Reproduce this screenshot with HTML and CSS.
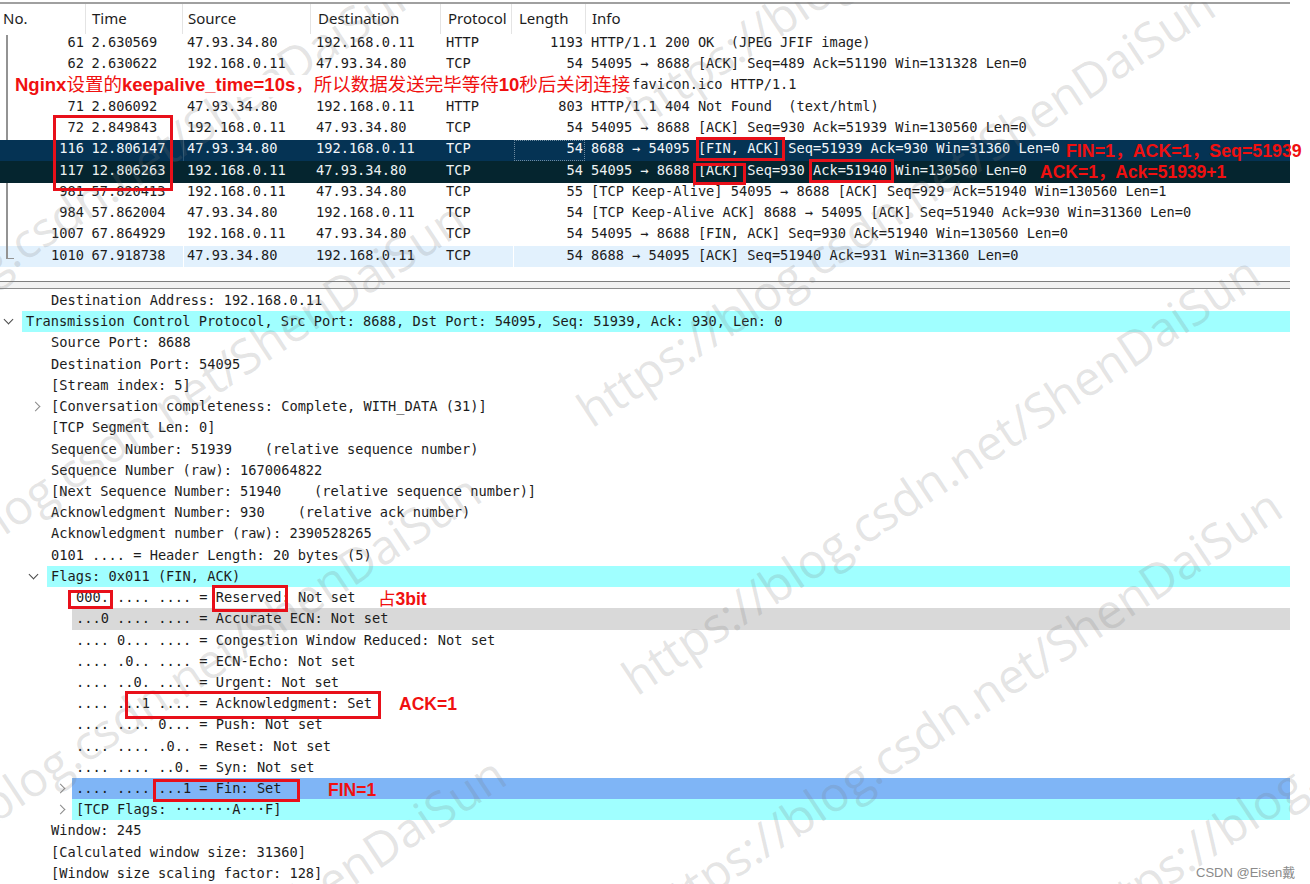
FILE: index.html
```html
<!DOCTYPE html>
<html lang="zh">
<head>
<meta charset="utf-8">
<title>Wireshark</title>
<link rel="stylesheet" href="styles.css">
</head>
<body>
<main class="app">
  <section class="packets">
    <div class="pk-head">
      <span class="c-no">No.</span><span class="c-time">Time</span><span class="c-src">Source</span><span class="c-dst">Destination</span><span class="c-proto">Protocol</span><span class="c-len">Length</span><span class="c-info">Info</span>
    </div>
    <div class="pk-row"><span class="c-no">61</span><span class="c-time">2.630569</span><span class="c-src">47.93.34.80</span><span class="c-dst">192.168.0.11</span><span class="c-proto">HTTP</span><span class="c-len">1193</span><span class="c-info">HTTP/1.1 200 OK  (JPEG JFIF image)</span></div>
    <div class="pk-row"><span class="c-no">62</span><span class="c-time">2.630622</span><span class="c-src">192.168.0.11</span><span class="c-dst">47.93.34.80</span><span class="c-proto">TCP</span><span class="c-len">54</span><span class="c-info">54095 → 8688 [ACK] Seq=489 Ack=51190 Win=131328 Len=0</span></div>
    <div class="pk-row"><span class="c-no">69</span><span class="c-time">2.764391</span><span class="c-src">192.168.0.11</span><span class="c-dst">47.93.34.80</span><span class="c-proto">HTTP</span><span class="c-len">494</span><span class="c-info">GET /favicon.ico HTTP/1.1</span></div>
    <div class="pk-row"><span class="c-no">71</span><span class="c-time">2.806092</span><span class="c-src">47.93.34.80</span><span class="c-dst">192.168.0.11</span><span class="c-proto">HTTP</span><span class="c-len">803</span><span class="c-info">HTTP/1.1 404 Not Found  (text/html)</span></div>
    <div class="pk-row"><span class="c-no">72</span><span class="c-time">2.849843</span><span class="c-src">192.168.0.11</span><span class="c-dst">47.93.34.80</span><span class="c-proto">TCP</span><span class="c-len">54</span><span class="c-info">54095 → 8688 [ACK] Seq=930 Ack=51939 Win=130560 Len=0</span></div>
    <div class="pk-row sel"><span class="c-no">116</span><span class="c-time">12.806147</span><span class="c-src">47.93.34.80</span><span class="c-dst">192.168.0.11</span><span class="c-proto">TCP</span><span class="c-len">54</span><span class="c-info">8688 → 54095 [FIN, ACK] Seq=51939 Ack=930 Win=31360 Len=0</span></div>
    <div class="pk-row rel"><span class="c-no">117</span><span class="c-time">12.806263</span><span class="c-src">192.168.0.11</span><span class="c-dst">47.93.34.80</span><span class="c-proto">TCP</span><span class="c-len">54</span><span class="c-info">54095 → 8688 [ACK] Seq=930 Ack=51940 Win=130560 Len=0</span></div>
    <div class="pk-row"><span class="c-no">981</span><span class="c-time">57.820413</span><span class="c-src">192.168.0.11</span><span class="c-dst">47.93.34.80</span><span class="c-proto">TCP</span><span class="c-len">55</span><span class="c-info">[TCP Keep-Alive] 54095 → 8688 [ACK] Seq=929 Ack=51940 Win=130560 Len=1</span></div>
    <div class="pk-row"><span class="c-no">984</span><span class="c-time">57.862004</span><span class="c-src">47.93.34.80</span><span class="c-dst">192.168.0.11</span><span class="c-proto">TCP</span><span class="c-len">54</span><span class="c-info">[TCP Keep-Alive ACK] 8688 → 54095 [ACK] Seq=51940 Ack=930 Win=31360 Len=0</span></div>
    <div class="pk-row"><span class="c-no">1007</span><span class="c-time">67.864929</span><span class="c-src">192.168.0.11</span><span class="c-dst">47.93.34.80</span><span class="c-proto">TCP</span><span class="c-len">54</span><span class="c-info">54095 → 8688 [FIN, ACK] Seq=930 Ack=51940 Win=130560 Len=0</span></div>
    <div class="pk-row pale"><span class="c-no">1010</span><span class="c-time">67.918738</span><span class="c-src">47.93.34.80</span><span class="c-dst">192.168.0.11</span><span class="c-proto">TCP</span><span class="c-len">54</span><span class="c-info">8688 → 54095 [ACK] Seq=51940 Ack=931 Win=31360 Len=0</span></div>
  </section>

  <div class="splitter"></div>

  <section class="details">
    <div class="row l1">Destination Address: 192.168.0.11</div>
    <div class="row l0 cyan"><span class="tw open"></span>Transmission Control Protocol, Src Port: 8688, Dst Port: 54095, Seq: 51939, Ack: 930, Len: 0</div>
    <div class="row l1">Source Port: 8688</div>
    <div class="row l1">Destination Port: 54095</div>
    <div class="row l1">[Stream index: 5]</div>
    <div class="row l1"><span class="tw"></span>[Conversation completeness: Complete, WITH_DATA (31)]</div>
    <div class="row l1">[TCP Segment Len: 0]</div>
    <div class="row l1">Sequence Number: 51939    (relative sequence number)</div>
    <div class="row l1">Sequence Number (raw): 1670064822</div>
    <div class="row l1">[Next Sequence Number: 51940    (relative sequence number)]</div>
    <div class="row l1">Acknowledgment Number: 930    (relative ack number)</div>
    <div class="row l1">Acknowledgment number (raw): 2390528265</div>
    <div class="row l1">0101 .... = Header Length: 20 bytes (5)</div>
    <div class="row l1 cyan"><span class="tw open"></span>Flags: 0x011 (FIN, ACK)</div>
    <div class="row l2">000. .... .... = Reserved: Not set</div>
    <div class="row l2 grey">...0 .... .... = Accurate ECN: Not set</div>
    <div class="row l2">.... 0... .... = Congestion Window Reduced: Not set</div>
    <div class="row l2">.... .0.. .... = ECN-Echo: Not set</div>
    <div class="row l2">.... ..0. .... = Urgent: Not set</div>
    <div class="row l2">.... ...1 .... = Acknowledgment: Set</div>
    <div class="row l2">.... .... 0... = Push: Not set</div>
    <div class="row l2">.... .... .0.. = Reset: Not set</div>
    <div class="row l2">.... .... ..0. = Syn: Not set</div>
    <div class="row l2 blue"><span class="tw"></span>.... .... ...1 = Fin: Set</div>
    <div class="row l2 cyan"><span class="tw"></span>[TCP Flags: ·······A···F]</div>
    <div class="row l1">Window: 245</div>
    <div class="row l1">[Calculated window size: 31360]</div>
    <div class="row l1">[Window size scaling factor: 128]</div>
  </section>

  <div class="tree"></div>

  <div class="marks">
    <span class="wm w1">https://blog.csdn.net/ShenDaiSun</span>
    <span class="wm w2">https://blog.csdn.net/ShenDaiSun</span>
    <span class="wm w3">https://blog.csdn.net/ShenDaiSun</span>
    <span class="wm w4">https://blog.csdn.net/ShenDaiSun</span>
    <span class="wm w5">https://blog.csdn.net/ShenDaiSun</span>
    <span class="wm w6">https://blog.csdn.net/ShenDaiSun</span>
    <span class="wm w7">https://blog.csdn.net/ShenDaiSun</span>
    <span class="wm w8">https://blog.csdn.net/ShenDaiSun</span>
    <span class="wm w9">https://blog.csdn.net/ShenDaiSun</span>
  </div>

  <div class="note n-top">Nginx<span class="cn">设置的</span>keepalive_time=10s<span class="cn">，所以数据发送完毕等待</span>10<span class="cn">秒后关闭连接</span></div>
  <div class="note n-fin">FIN=1，ACK=1，Seq=51939</div>
  <div class="note n-ack">ACK=1，Ack=51939+1</div>
  <div class="note n-3bit"><span class="cn">占</span>3bit</div>
  <div class="note n-ack2">ACK=1</div>
  <div class="note n-fin2">FIN=1</div>

  <div class="box b-no"></div>
  <div class="box b-finack"></div>
  <div class="box b-ack"></div>
  <div class="box b-ack51940"></div>
  <div class="box b-000"></div>
  <div class="box b-res"></div>
  <div class="box b-ackflag"></div>
  <div class="box b-finflag"></div>

  <div class="credit">CSDN @Eisen戴</div>
</main>
</body>
</html>
```
FILE: styles.css
```css
* { box-sizing: border-box; }
html, body { margin: 0; padding: 0; background: #fff; }
body { width: 1310px; height: 884px; overflow: hidden; }
.app {
  position: relative;
  width: 1290px;
  height: 884px;
  font-family: "DejaVu Sans Mono", "Liberation Mono", monospace;
  font-size: 13.67px;
  color: #1c1c1c;
}
.packets { border-top: 2px solid #a0a0a0; margin-top: 2px; height: 279px; }
.pk-head {
  display: flex;
  height: 30px;
  font-family: "Noto Sans", "Liberation Sans", sans-serif;
  font-size: 15px;
  line-height: 28px;
}
.pk-head span { border-right: 1px solid #e4e4e4; padding-left: 3px; }
.pk-head .c-no { width: 86px; text-align: left; }
.pk-head .c-time { width: 97px; padding-left: 6px; }
.pk-head .c-src { width: 128px; padding-left: 5px; }
.pk-head .c-dst { width: 130px; padding-left: 7px; }
.pk-head .c-proto { width: 71px; padding-left: 7px; }
.pk-head .c-len { width: 74px; padding-left: 7px; text-align: left; }
.pk-head .c-info { border: 0; padding-left: 6px; flex: 1; }

.pk-row { display: flex; height: 21.22px; line-height: 17px; white-space: pre; }
.pk-row span { display: block; }
.c-no { width: 84px; text-align: right; flex: none; }
.c-time { width: 103px; padding-left: 7.5px; flex: none; position: relative; }
.c-src { width: 129px; flex: none; }
.c-dst { width: 130px; flex: none; }
.c-proto { width: 70px; flex: none; }
.c-len { width: 67px; text-align: right; flex: none; position: relative; }
.c-info { padding-left: 8px; flex: 1; }
.sel, .rel { position: relative; z-index: 1; }
.sel { background: #053354; color: #f2f6f9; }
.rel { background: #05252f; color: #eef2f3; line-height: 19px; }
.pale { background: #e2f1fd; line-height: 19px; }
.sel .c-len { outline: 1px dotted #6f8ba0; outline-offset: 1px; height: 17px; margin-top: 2px; line-height: 13px; }
.sel .c-time::after, .pale .c-time::after, .pale .c-len::before {
  content: "";
  position: absolute;
  top: 0;
  bottom: -5px;
  width: 1px;
  background: #fff;
}
.sel .c-time::after { right: 3px; background: #2a5573; }
.pale .c-time::after { right: 3px; }
.pale .c-len::before { left: -3px; }

.splitter {
  height: 8px;
  border-top: 1px solid #7f7f7f;
  border-bottom: 1px solid #8c8c8c;
  background: #f2f2f2;
}
.details { margin-top: 1px; }
.row { height: 21.22px; line-height: 21px; position: relative; white-space: pre; }
.l0 { margin-left: 22px; padding-left: 4px; }
.l1 { margin-left: 47px; padding-left: 4px; }
.l2 { margin-left: 72px; padding-left: 4px; }
.cyan { background: #a0ffff; }
.grey { background: #d9d9d9; }
.blue { background: #7fb5f6; }
.tw {
  position: absolute;
  left: -15px;
  top: 7px;
  width: 7px;
  height: 7px;
  border-top: 1.5px solid #8a8a8a;
  border-right: 1.5px solid #8a8a8a;
  transform: rotate(45deg);
}
.tw.open {
  left: -17px;
  top: 5px;
  border-color: #4a4a4a;
  transform: rotate(135deg);
}
.tree {
  position: absolute;
  left: 6px;
  top: 33px;
  width: 8px;
  height: 224px;
  border-left: 2px solid #939393;
  border-bottom: 1px solid #939393;
}

.marks { position: absolute; left: 0; top: 0; width: 1310px; height: 884px; overflow: hidden; pointer-events: none; z-index: 2; }
.wm {
  position: absolute;
  font-family: "Open Sans", sans-serif;
  font-size: 48px;
  line-height: 1;
  white-space: nowrap;
  color: rgba(120, 120, 120, 0.2);
  transform-origin: 0 100%;
  transform: rotate(-33.5deg);
}
.w1 { left: -200px; top: 368px; }
.w2 { left: -154px; top: 598px; }
.w3 { left: 645px; top: 84px; }
.w4 { left: -139px; top: 870px; }
.w5 { left: 595px; top: 384px; }
.w6 { left: -114px; top: 1153px; }
.w7 { left: 640px; top: 652px; }
.w8 { left: 662px; top: 885px; }
.w9 { left: 1095px; top: 893px; }

.note {
  position: absolute;
  z-index: 3;
  font-family: "Liberation Sans", "Noto Sans CJK SC", sans-serif;
  font-weight: 700;
  color: #f01010;
  line-height: 20px;
  height: 20px;
  white-space: nowrap;
  font-size: 17.5px;
}
.cn { font-weight: 400; }
.n-top { left: 15px; top: 73px; width: 618px; font-size: 18.5px; background: #fff; height: 22px; }
.n-fin { left: 1066px; top: 139px; font-size: 17.8px; }
.n-ack { left: 1040px; top: 160px; }
.n-3bit { left: 378px; top: 587px; }
.n-ack2 { left: 399px; top: 692px; }
.n-fin2 { left: 328px; top: 778px; }

.box { position: absolute; z-index: 3; border: 3px solid #e8101a; }
.b-no { left: 53px; top: 113px; width: 120px; height: 76px; }
.b-finack { left: 696px; top: 135px; width: 89px; height: 24px; }
.b-ack { left: 693px; top: 161px; width: 53px; height: 22px; }
.b-ack51940 { left: 809px; top: 157px; width: 85px; height: 24px; }
.b-000 { left: 68px; top: 588px; width: 45px; height: 19px; }
.b-res { left: 212px; top: 583px; width: 76px; height: 27px; }
.b-ackflag { left: 125px; top: 689px; width: 256px; height: 28px; }
.b-finflag { left: 153px; top: 777px; width: 147px; height: 23px; }

.credit {
  position: absolute;
  z-index: 3;
  left: 1196px;
  top: 860px;
  white-space: nowrap;
  font-family: "Liberation Sans", "Noto Sans CJK SC", sans-serif;
  font-size: 13px;
  color: #8a8a8a;
}
```
